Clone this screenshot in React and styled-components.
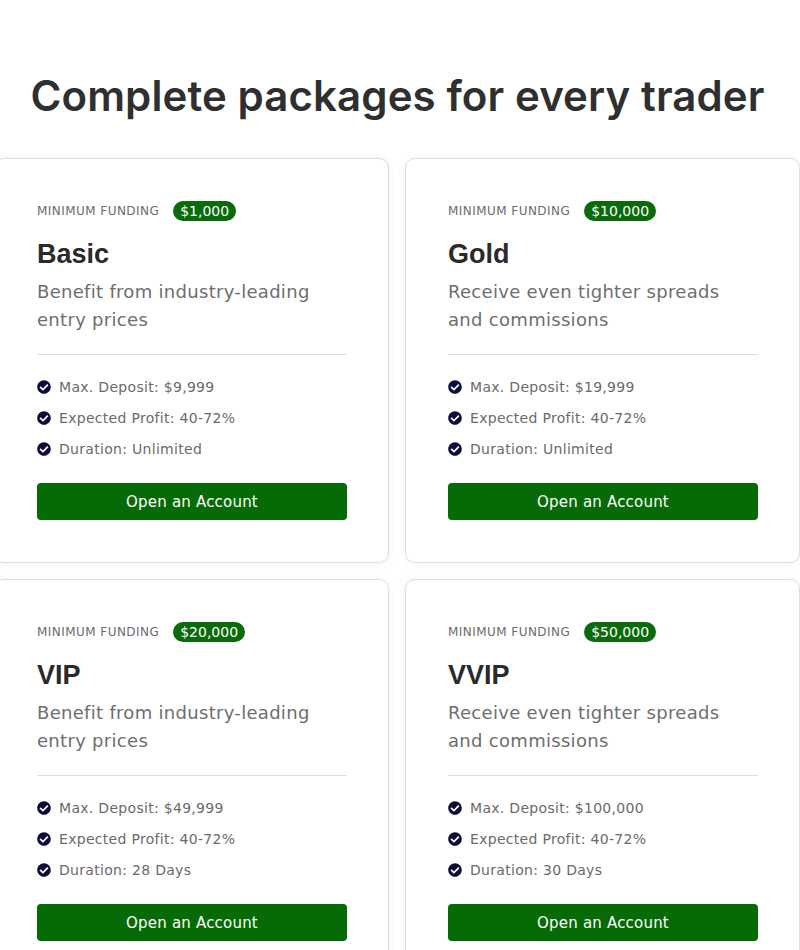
import styled, { createGlobalStyle } from 'styled-components'
import { FaCheckCircle } from 'react-icons/fa'

const GlobalStyle = createGlobalStyle`
  body {
    margin: 0;
    background: #fff;
    font-family: "DejaVu Sans", Verdana, sans-serif;
  }
`;

const Section = styled.section`
  width: 800px;
  padding-top: 68px;
  overflow: hidden;
`;

const Heading = styled.h1`
  margin: 0 0 34px;
  padding-right: 5px;
  text-align: center;
  font-family: Inter, "Open Sans", sans-serif;
  font-weight: 600;
  font-size: 42px;
  line-height: 56px;
  color: #2f2f2f;
  letter-spacing: 0.1px;
`;

const Grid = styled.div`
  display: grid;
  grid-template-columns: 395px 395px;
  gap: 16px;
  margin-left: -6px;
`;

const Card = styled.div`
  box-sizing: border-box;
  height: 405px;
  padding: 42px 41px 42px 42px;
  background: #fff;
  border: 1px solid #dedede;
  border-radius: 10px;
  box-shadow: 0 0 8px rgba(0, 0, 0, 0.06);
`;

const FundingRow = styled.div`
  display: flex;
  align-items: center;
  gap: 14px;
  height: 20px;
`;

const FundingLabel = styled.span`
  font-size: 12px;
  letter-spacing: 0.45px;
  color: #6b6b6b;
  text-transform: uppercase;
`;

const Badge = styled.span`
  background: #0a6b0a;
  color: #fff;
  font-size: 14px;
  padding: 1px 7px;
  border-radius: 10px;
  line-height: 18px;
`;

const Title = styled.h2`
  margin: 16px 0 0;
  font-family: "Liberation Sans", Arial, sans-serif;
  font-weight: 600;
  font-size: 27px;
  line-height: 34px;
  color: #2a2a2a;
`;

const Description = styled.p`
  margin: 7px 0 0;
  font-size: 18px;
  letter-spacing: 0.3px;
  line-height: 28px;
  color: #6e6e6e;
  padding-bottom: 20px;
  border-bottom: 1px solid #ddd;
`;

const Features = styled.ul`
  list-style: none;
  margin: 0;
  padding: 22px 0 0;
  display: flex;
  flex-direction: column;
  gap: 11px;
`;

const Feature = styled.li`
  display: flex;
  align-items: center;
  gap: 8px;
  font-size: 14px;
  letter-spacing: 0.3px;
  line-height: 20px;
  color: #6a6a6a;

  svg {
    color: #0c0c3c;
    flex-shrink: 0;
  }
`;

const Button = styled.button`
  display: block;
  width: 100%;
  height: 37px;
  margin-top: 24px;
  border: none;
  border-radius: 4px;
  background: #066a06;
  color: #fff;
  font-family: "DejaVu Sans", Verdana, sans-serif;
  font-size: 15px;
  letter-spacing: 0.2px;
  cursor: pointer;
`;

const packages = [
  { name: 'Basic', min: '$1,000', text: 'Benefit from industry-leading entry prices', max: '$9,999', duration: 'Unlimited' },
  { name: 'Gold', min: '$10,000', text: 'Receive even tighter spreads and commissions', max: '$19,999', duration: 'Unlimited' },
  { name: 'VIP', min: '$20,000', text: 'Benefit from industry-leading entry prices', max: '$49,999', duration: '28 Days' },
  { name: 'VVIP', min: '$50,000', text: 'Receive even tighter spreads and commissions', max: '$100,000', duration: '30 Days' },
];

function App() {
  return (
    <Section>
      <GlobalStyle />
      <Heading>Complete packages for every trader</Heading>
      <Grid>
        {packages.map((p) => (
          <Card key={p.name}>
            <FundingRow>
              <FundingLabel>Minimum Funding</FundingLabel>
              <Badge>{p.min}</Badge>
            </FundingRow>
            <Title>{p.name}</Title>
            <Description>{p.text}</Description>
            <Features>
              <Feature><FaCheckCircle size={14} /> Max. Deposit: {p.max}</Feature>
              <Feature><FaCheckCircle size={14} /> Expected Profit: 40-72%</Feature>
              <Feature><FaCheckCircle size={14} /> Duration: {p.duration}</Feature>
            </Features>
            <Button>Open an Account</Button>
          </Card>
        ))}
      </Grid>
    </Section>
  )
}

export default App
